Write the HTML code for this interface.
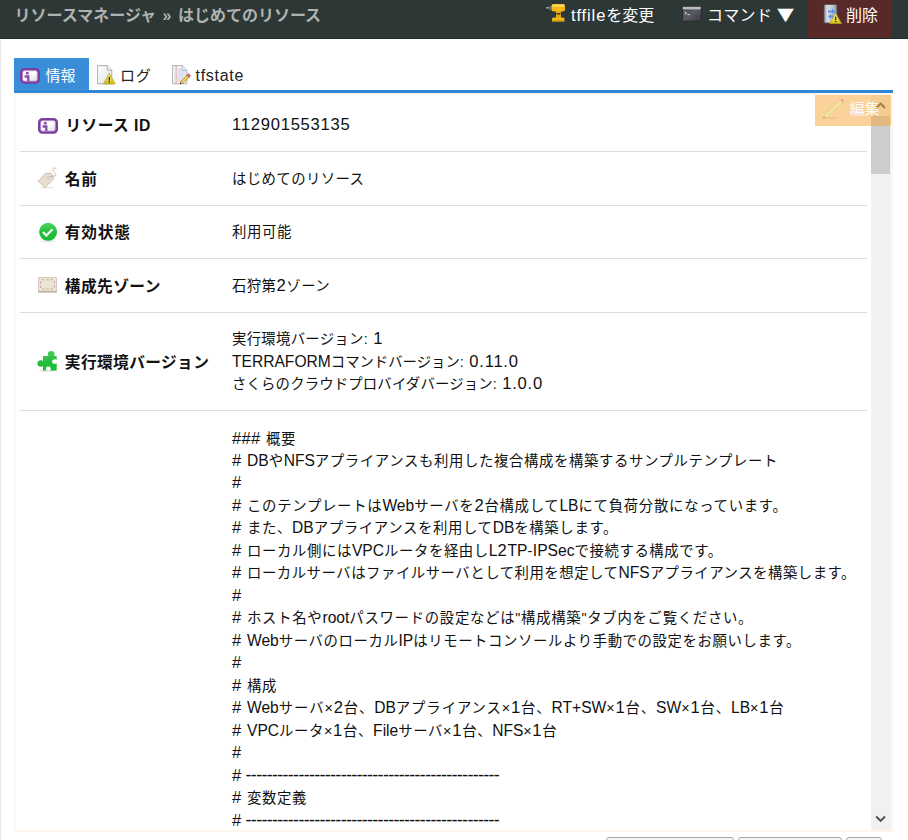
<!DOCTYPE html>
<html lang="ja">
<head>
<meta charset="utf-8">
<title>リソースマネージャ</title>
<style>
html,body{margin:0;padding:0;}
body{width:908px;height:840px;overflow:hidden;background:#fff;position:relative;
  font-family:"Liberation Sans","Noto Sans CJK JP",sans-serif;color:#222;}
.abs{position:absolute;white-space:nowrap;}
svg{position:absolute;overflow:visible;}
#edge{left:0;top:39px;width:1px;height:801px;background:#e8e8e8;}
#hdr{left:0;top:0;width:908px;height:38px;background:#2d3836;border-bottom:1px solid #1f2a28;}
#hdr .t{position:absolute;white-space:nowrap;top:2.5px;height:26px;line-height:26px;font-size:16px;color:#fff;}
#title{left:14.5px;font-weight:bold;color:#aeb2b1 !important;word-spacing:2px;}
#del{left:808px;top:0;width:83px;height:38px;background:#582a27;}
.tab{top:58.5px;height:32px;line-height:34px;font-size:15px;color:#222;}
#tab1{left:14px;top:58px !important;width:75px;height:33px;line-height:35px;background:#3a8dd8;color:#fff;}
#tabline{left:14px;top:90px;width:879px;height:3px;background:#3186d5;}
#panel{left:14px;top:93px;width:875px;height:735px;border:2px solid #fef6ec;background:#fff;}
.sep{left:20px;width:847px;height:1px;background:#dcdcdc;}
.lbl{left:64.8px;margin-top:.8px;font-weight:bold;font-size:15.7px;letter-spacing:.8px;height:24px;line-height:24px;color:#111;}
.val{left:232px;margin-top:.5px;font-size:14.4px;word-spacing:1.5px;height:22.5px;line-height:22.5px;color:#111;}
.l{font-size:15.6px;}
.d{font-size:16.6px;letter-spacing:.75px;}
.h{font-size:16.5px;letter-spacing:.3px;}
.ds{font-size:18px;position:relative;top:.9px;line-height:1px;margin-left:-1.4px;}
#sbar{left:871px;top:95px;width:20px;height:735px;background:#f1f1f1;}
#thumb{left:871px;top:116px;width:19px;height:58px;background:#cdcdcd;}
#edit{left:815px;top:95px;width:76px;height:31px;background:rgba(247,166,53,.5);}
#edit span{position:absolute;left:34.5px;top:2px;font-size:15px;line-height:24px;color:rgba(255,255,255,.92);}
.btn{top:837px;height:10px;border:1px solid #a9a9a9;border-radius:3px;background:#f6f6f6;box-sizing:border-box;}
</style>
</head>
<body>
<div id="hdr" class="abs">
  <div id="del" class="abs"></div>
  <div id="title" class="t">リソースマネージャ » はじめてのリソース</div>
  <!-- drill icon -->
  <svg style="left:546px;top:4px" width="20" height="18" viewBox="0 0 20 18">
    <rect x="0" y="3" width="4" height="1.6" fill="#9a9a9a"/>
    <rect x="3" y="1.5" width="3" height="5" rx="1" fill="#5b5b5b"/>
    <rect x="5.5" y="0" width="13.5" height="7.5" rx="2.2" fill="#f2b81c"/>
    <rect x="6" y="0.6" width="12.5" height="2.2" rx="1.1" fill="#fbd75a"/>
    <rect x="10" y="7" width="5" height="8" fill="#e9a916"/>
    <rect x="10.5" y="9" width="4" height="1.6" fill="#3a3a3a"/>
    <rect x="6" y="13.5" width="12.5" height="4.5" rx="1.6" fill="#f2b81c"/>
    <rect x="6.5" y="16.6" width="11.5" height="1.4" rx=".7" fill="#b97f0c"/>
  </svg>
  <div class="t" style="left:571px"><span style="font-size:16.6px;letter-spacing:.85px">tffile</span>を変更</div>
  <!-- terminal icon -->
  <svg style="left:682px;top:6px" width="20" height="16" viewBox="0 0 20 16">
    <defs><linearGradient id="tg" x1="0" y1="0" x2="1" y2="1"><stop offset="0" stop-color="#3f3f45"/><stop offset=".5" stop-color="#5a5a66"/><stop offset="1" stop-color="#3a3a40"/></linearGradient></defs>
    <rect x="0" y="0" width="19.5" height="15.5" rx="1.2" fill="#27272a"/>
    <rect x=".8" y=".8" width="17.9" height="13.9" fill="url(#tg)"/>
    <rect x=".8" y=".8" width="17.9" height="2.6" fill="#bdbdbd"/>
    <path d="M2.5 5.6l2.2 1.4l-2.2 1.4M5.4 8.6h2.4" stroke="#e6e6e6" stroke-width=".9" fill="none"/>
  </svg>
  <div class="t" style="left:707px;letter-spacing:.3px">コマンド</div>
  <div class="t" id="tri" style="left:777.2px;top:1px;font-family:'DejaVu Sans',sans-serif;font-size:21.5px;transform:scaleY(.82);transform-origin:50% 50%">▼</div>
  <!-- delete icon -->
  <svg style="left:823px;top:4px" width="19" height="20" viewBox="0 0 19 20">
    <defs><linearGradient id="sg" x1="0" y1="0" x2="1" y2="0"><stop offset="0" stop-color="#8d93a0"/><stop offset=".25" stop-color="#d9dce4"/><stop offset=".75" stop-color="#b9bdc8"/><stop offset="1" stop-color="#7f8592"/></linearGradient>
    <linearGradient id="wg" x1="0" y1="0" x2="0" y2="1"><stop offset="0" stop-color="#fbf08a"/><stop offset="1" stop-color="#d8c21a"/></linearGradient></defs>
    <rect x="1" y="0.5" width="13" height="18.5" rx="1" fill="url(#sg)" stroke="#4e525c" stroke-width=".8"/>
    <path d="M5 6.5h4v-2l3.2 3l-3.2 3v-2h-4z" fill="#5b8fe8"/>
    <path d="M11 11.5h-3v-1.6l-3 2.6l3 2.6v-1.6h3z" fill="#5b8fe8"/>
    <path d="M12.6 9.2l5.9 10.3h-11.8z" fill="url(#wg)" stroke="#b8a416" stroke-width=".7" stroke-linejoin="round"/>
    <rect x="12" y="12.6" width="1.3" height="3.6" fill="#333"/><rect x="12" y="17" width="1.3" height="1.3" fill="#333"/>
  </svg>
  <div class="t" style="left:846px">削除</div>
</div>
<div id="edge" class="abs"></div>

<div id="tab1" class="abs tab"><span style="position:absolute;left:31.5px;top:0">情報</span>
  <svg style="left:6px;top:9.5px" width="20" height="16" viewBox="0 0 20 16">
    <defs><linearGradient id="ig" x1="0" y1="0" x2="1" y2="1"><stop offset="0" stop-color="#fff"/><stop offset=".5" stop-color="#fdfdfd"/><stop offset="1" stop-color="#d4d4d8"/></linearGradient></defs>
    <rect x="1.3" y="1.3" width="17.400" height="13.200" rx="3.200" fill="url(#ig)" stroke="#7b3d9f" stroke-width="2.600"/>
    <rect x="2.700" y="2.700" width="14.600" height="10.400" rx="1.800" fill="none" stroke="#b488cf" stroke-width=".8" opacity=".8"/>
    <circle cx="7.300" cy="5.200" r="1.450" fill="#8a4cae"/>
    <path d="M4.600 8.500h3.700v4.600" stroke="#8a4cae" stroke-width="2.300" fill="none"/>
  </svg>
</div>
<!-- log icon -->
<svg style="left:97px;top:65px" width="19" height="20" viewBox="0 0 19 20">
  <defs><linearGradient id="pg" x1="0" y1="0" x2="1" y2="1"><stop offset="0" stop-color="#fff"/><stop offset="1" stop-color="#dfe5e3"/></linearGradient>
  <linearGradient id="wg2" x1="0" y1="0" x2="0" y2="1"><stop offset="0" stop-color="#fbf08a"/><stop offset="1" stop-color="#d2bc14"/></linearGradient></defs>
  <path d="M.6 .6h9.6l4.6 4.6v13.6h-14.2z" fill="url(#pg)" stroke="#a9b0ae" stroke-width="1"/>
  <path d="M10.2 .6v4.6h4.6" fill="#eef1f0" stroke="#a9b0ae" stroke-width=".9"/>
  <path d="M12.3 8.2l5.9 10.8h-11.8z" fill="url(#wg2)" stroke="#b3a012" stroke-width=".7" stroke-linejoin="round"/>
  <rect x="11.7" y="11.8" width="1.3" height="3.8" fill="#333"/><rect x="11.7" y="16.4" width="1.3" height="1.3" fill="#333"/>
</svg>
<div class="abs tab" style="left:120px;letter-spacing:.8px">ログ</div>
<!-- tfstate icon -->
<svg style="left:172px;top:65px" width="19" height="20" viewBox="0 0 19 20">
  <path d="M.6 .6h9.6l4.6 4.6v13.6h-14.2z" fill="#fbfbfd" stroke="#a9b0ae" stroke-width="1"/>
  <path d="M10.2 .6v4.6h4.6" fill="#eef1f0" stroke="#a9b0ae" stroke-width=".9"/>
  <path d="M3.2 1v17.6M4.6 1v17.6" stroke="#e8a0a0" stroke-width=".7"/>
  <path d="M5.5 4h4M5.5 6h8M5.5 8h8M5.5 10h8M5.5 12h6M5.5 14h4M5.5 16h3" stroke="#aebbe6" stroke-width=".8"/>
  <path d="M8 19l.9-3l6-5.800l2.100 2.100l-6 5.800z" fill="#f1cf5a" stroke="#8d7327" stroke-width=".7"/>
  <path d="M14.900 10.200l.9-.9a1.100 1.100 0 0 1 1.600 0l.6.6a1.100 1.100 0 0 1 0 1.600l-.9.9z" fill="#e8657a" stroke="#9c3848" stroke-width=".5"/>
  <path d="M8 19l.4-1.400l1 1z" fill="#222"/>
</svg>
<div class="abs tab" style="left:195.5px;font-size:16px;letter-spacing:.7px">tfstate</div>
<div id="tabline" class="abs"></div>

<div id="panel" class="abs"></div>

<div class="abs sep" style="top:151px"></div>
<div class="abs sep" style="top:205px"></div>
<div class="abs sep" style="top:258px"></div>
<div class="abs sep" style="top:312px"></div>
<div class="abs sep" style="top:410px"></div>

<!-- row icons -->
<svg style="left:38px;top:117.5px" width="20" height="16" viewBox="0 0 20 16">
  <rect x="1.3" y="1.3" width="17.400" height="13.200" rx="3.200" fill="url(#ig)" stroke="#7b3d9f" stroke-width="2.600"/>
    <rect x="2.700" y="2.700" width="14.600" height="10.400" rx="1.800" fill="none" stroke="#b488cf" stroke-width=".8" opacity=".8"/>
    <circle cx="7.300" cy="5.200" r="1.450" fill="#8a4cae"/>
    <path d="M4.600 8.500h3.700v4.600" stroke="#8a4cae" stroke-width="2.300" fill="none"/>
</svg>
<svg style="left:36px;top:166px" width="24" height="24" viewBox="36 166 24 24">
  <ellipse cx="47" cy="187.6" rx="8" ry=".9" fill="#000" opacity=".08"/>
  <path d="M38.2 181.2l7.3-8h5.6l2.2 3v3l-8.4 8.4z" fill="#e8dbcf" stroke="#c9b6a7" stroke-width=".8" stroke-linejoin="round"/>
  <circle cx="48.6" cy="177.4" r="1.1" fill="#fff" stroke="#b9a595" stroke-width=".6"/>
  <path d="M48.8 177.2c3 -1.2 5.6 -.6 7 -1.800c1.400 -1.400 -3.200 -3.800 -3.200 -6c0 -1.600 2.200 -1.800 3.600 -.8" fill="none" stroke="#c6b3a3" stroke-width=".9"/>
</svg>
<svg style="left:38px;top:222px" width="20" height="21" viewBox="0 0 20 21">
  <defs><linearGradient id="cg" x1="0" y1="0" x2="0" y2="1"><stop offset="0" stop-color="#52d567"/><stop offset=".5" stop-color="#25bf3c"/><stop offset="1" stop-color="#19ba2e"/></linearGradient></defs>
  <ellipse cx="10" cy="19.3" rx="7.5" ry="1" fill="#000" opacity=".1"/>
  <circle cx="10.1" cy="9.8" r="9" fill="url(#cg)"/>
  <path d="M5 10l3.300 3.600l6.200 -6.400" fill="none" stroke="#f4f4f4" stroke-width="2.300"/>
</svg>
<svg style="left:38px;top:277px" width="19" height="16" viewBox="0 0 19 16">
  <rect x="0" y="0" width="19" height="15.6" rx="1.2" fill="#d6c9bd"/>
  <rect x="0" y="13.800" width="19" height="1.800" rx=".9" fill="#c5b4a4"/>
  <rect x="1.200" y="1.200" width="16.600" height="12.400" fill="#f1ebe1"/>
  <rect x="2.600" y="2.800" width="13.800" height="9.200" rx="1.500" fill="#ece4d7" stroke="#bfae9f" stroke-width="1.100" stroke-dasharray="2.600 1.600"/>
</svg>
<svg style="left:36px;top:350px" width="24" height="22" viewBox="36 350 24 22">
  <defs><linearGradient id="zg" x1="0" y1="0" x2="0" y2="1"><stop offset="0" stop-color="#45d05b"/><stop offset=".55" stop-color="#27bb3d"/><stop offset="1" stop-color="#16c22d"/></linearGradient></defs>
  <ellipse cx="48" cy="370.600" rx="9.500" ry=".8" fill="#000" opacity=".12"/>
  <path fill="url(#zg)" fill-rule="evenodd" d="M43 356h5.600c-1.400 -1.200 -1.200 -5 2.600 -5s4 3.800 2.600 5h2.900v3.800c-2.200 -1.400 -4.600 -.3 -4.600 1.700s2.400 3.100 4.600 1.700v7.400h-6.400c1.300 -2.200 .2 -4.200 -1.900 -4.200s-3.200 2 -1.900 4.200h-3.500v-4.600c-1 1.300 -5.600 1.600 -5.600 -2.400s4.600 -3.600 5.600 -2.400z"/>
</svg>

<div class="abs lbl" style="top:113px;left:65.5px;letter-spacing:.4px;word-spacing:.2px">リソース <span style="letter-spacing:.6px">ID</span></div>
<div class="abs val" style="top:113px"><span class="d">112901553135</span></div>
<div class="abs lbl" style="top:167px">名前</div>
<div class="abs val" style="top:167px"><span style="letter-spacing:0.400px">はじめてのリソース</span></div>
<div class="abs lbl" style="top:220px">有効状態</div>
<div class="abs val" style="top:220px"><span style="letter-spacing:0.600px">利用可能</span></div>
<div class="abs lbl" style="top:274px;letter-spacing:.45px">構成先ゾーン</div>
<div class="abs val" style="top:274px"><span style="letter-spacing:0.400px">石狩第</span><span class="d">2</span><span style="letter-spacing:0.400px">ゾーン</span></div>
<div class="abs lbl" style="top:350px;letter-spacing:.4px">実行環境バージョン</div>
<div class="abs val" style="top:327px"><span style="letter-spacing:0.267px">実行環境バージョン</span>: <span class="d">1</span></div>
<div class="abs val" style="top:350px"><span class="l">TERRAFORM</span><span style="letter-spacing:-0.022px">コマンドバージョン</span>: <span class="d">0.11.0</span></div>
<div class="abs val" style="top:372px"><span style="letter-spacing:0.144px">さくらのクラウドプロバイダバージョン</span>: <span class="d">1.0.0</span></div>

<div class="abs val dl" id="L1" style="top:426.0px"><span class="h">###</span> <span style="letter-spacing:0.600px">概要</span></div>
<div class="abs val dl" id="L2" style="top:448.5px"><span class="h">#</span> <span class="l">DB</span><span style="letter-spacing:0.606px">や</span><span class="l">NFS</span><span style="letter-spacing:0.606px">アプライアンスも利用した複合構成を構築するサンプルテンプレート</span></div>
<div class="abs val dl" id="L3" style="top:470.9px"><span class="h">#</span></div>
<div class="abs val dl" id="L4" style="top:493.4px"><span class="h">#</span> <span style="letter-spacing:0.700px">このテンプレートは</span><span class="l">Web</span><span style="letter-spacing:0.700px">サーバを</span><span class="d">2</span><span style="letter-spacing:0.700px">台構成して</span><span class="l">LB</span><span style="letter-spacing:0.700px">にて負荷分散になっています。</span></div>
<div class="abs val dl" id="L5" style="top:515.9px"><span class="h">#</span> <span style="letter-spacing:0.627px">また、</span><span class="l">DB</span><span style="letter-spacing:0.627px">アプライアンスを利用して</span><span class="l">DB</span><span style="letter-spacing:0.627px">を構築します。</span></div>
<div class="abs val dl" id="L6" style="top:538.4px"><span class="h">#</span> <span style="letter-spacing:0.592px">ローカル側には</span><span class="l">VPC</span><span style="letter-spacing:0.592px">ルータを経由し</span><span class="l">L</span><span class="d">2</span><span class="l">TP</span><span style="letter-spacing:0.592px">-</span><span class="l">IPSec</span><span style="letter-spacing:0.592px">で接続する構成です。</span></div>
<div class="abs val dl" id="L7" style="top:560.8px"><span class="h">#</span> <span style="letter-spacing:0.513px">ローカルサーバはファイルサーバとして利用を想定して</span><span class="l">NFS</span><span style="letter-spacing:0.513px">アプライアンスを構築します。</span></div>
<div class="abs val dl" id="L8" style="top:583.3px"><span class="h">#</span></div>
<div class="abs val dl" id="L9" style="top:605.8px"><span class="h">#</span> <span style="letter-spacing:0.697px">ホスト名や</span><span class="l">root</span><span style="letter-spacing:0.697px">パスワードの設定などは&quot;構成構築&quot;タブ内をご覧ください。</span></div>
<div class="abs val dl" id="L10" style="top:628.2px"><span class="h">#</span> <span class="l">Web</span><span style="letter-spacing:0.588px">サーバのローカル</span><span class="l">IP</span><span style="letter-spacing:0.588px">はリモートコンソールより手動での設定をお願いします。</span></div>
<div class="abs val dl" id="L11" style="top:650.7px"><span class="h">#</span></div>
<div class="abs val dl" id="L12" style="top:673.2px"><span class="h">#</span> <span style="letter-spacing:0.600px">構成</span></div>
<div class="abs val dl" id="L13" style="top:695.6px"><span class="h">#</span> <span class="l">Web</span><span style="letter-spacing:0.867px">サーバ×</span><span class="d">2</span><span style="letter-spacing:0.867px">台、</span><span class="l">DB</span><span style="letter-spacing:0.867px">アプライアンス×</span><span class="d">1</span><span style="letter-spacing:0.867px">台、</span><span class="l">RT+SW</span><span style="letter-spacing:0.867px">×</span><span class="d">1</span><span style="letter-spacing:0.867px">台、</span><span class="l">SW</span><span style="letter-spacing:0.867px">×</span><span class="d">1</span><span style="letter-spacing:0.867px">台、</span><span class="l">LB</span><span style="letter-spacing:0.867px">×</span><span class="d">1</span><span style="letter-spacing:0.867px">台</span></div>
<div class="abs val dl" id="L14" style="top:718.1px"><span class="h">#</span> <span class="l">VPC</span><span style="letter-spacing:0.614px">ルータ×</span><span class="d">1</span><span style="letter-spacing:0.614px">台、</span><span class="l">File</span><span style="letter-spacing:0.614px">サーバ×</span><span class="d">1</span><span style="letter-spacing:0.614px">台、</span><span class="l">NFS</span><span style="letter-spacing:0.614px">×</span><span class="d">1</span><span style="letter-spacing:0.614px">台</span></div>
<div class="abs val dl" id="L15" style="top:740.6px"><span class="h">#</span></div>
<div class="abs val dl" id="L16" style="top:763.0px"><span class="h">#</span> <span class="ds" style="letter-spacing:-0.713px">------------------------------------------------</span></div>
<div class="abs val dl" id="L17" style="top:785.5px"><span class="h">#</span> <span style="letter-spacing:0.600px">変数定義</span></div>
<div class="abs val dl" id="L18" style="top:808.0px"><span class="h">#</span> <span class="ds" style="letter-spacing:-0.713px">------------------------------------------------</span></div>

<div id="sbar" class="abs"></div>
<div id="thumb" class="abs"></div>
<svg style="left:871px;top:95px" width="20" height="20" viewBox="0 0 20 20"><path d="M5.200 13l4.400 -4.400l4.400 4.400" fill="none" stroke="#505050" stroke-width="2"/></svg>
<svg style="left:871px;top:810px" width="20" height="20" viewBox="0 0 20 20"><path d="M5.200 6.500l4.400 4.400l4.400 -4.400" fill="none" stroke="#505050" stroke-width="2"/></svg>
<div id="edit" class="abs"><span>編集</span>
  <svg style="left:7px;top:3px" width="24" height="22" viewBox="0 0 24 22">
    <ellipse cx="9" cy="20" rx="8" ry=".8" fill="#000" opacity=".08"/>
    <path d="M1.400 20.200l1.400 -4l15.200 -14.200l2.700 2.700l-15.300 14.200z" fill="#f1e6a0" stroke="#d6c67a" stroke-width=".6" opacity=".85"/>
    <path d="M18 2l1 -.9a1.500 1.500 0 0 1 2.100 0l.7 .7a1.500 1.500 0 0 1 0 2.100l-1 .9z" fill="#f3a3a6" opacity=".9"/>
    <path d="M1.400 20.200l.5 -1.500l1 1z" fill="#4a5a7a"/>
  </svg>
</div>

<div class="abs btn" style="left:606px;width:128px"></div>
<div class="abs btn" style="left:738px;width:104px"></div>
<div class="abs btn" style="left:846px;width:36px"></div>
</body>
</html>
